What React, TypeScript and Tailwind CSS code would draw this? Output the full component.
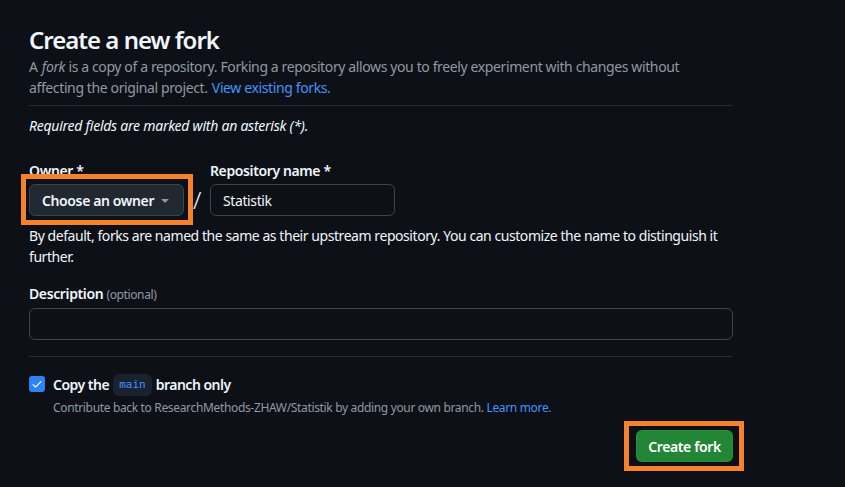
export default function App() {
  return (
    <main
      className="min-h-screen w-full bg-[#0d1117] text-[#f0f6fc] tracking-[-0.38px]"
      style={{ fontFamily: '"Noto Sans", "Liberation Sans", sans-serif' }}
    >
      <div className="w-[704px] ml-[29px] pt-[25px]">
        <h1 className="text-[24px] leading-[30px] font-semibold tracking-[-1px]">Create a new fork</h1>
        <p className="mt-[1px] text-[14px] leading-[21px] text-[#9198a1]">
          A <em className="pl-[1px]">fork</em> is a copy of a repository. Forking a repository allows you to freely experiment with
          changes without affecting the original project.{' '}
          <a className="text-[#4493f8] pl-[1px]">View existing forks.</a>
        </p>
        <div className="mt-[7px] border-t border-[#262c36]" />
        <p className="mt-[9px] text-[14px] leading-[21px] italic tracking-[-0.25px]">
          Required fields are marked with an asterisk (*).
        </p>

        <div className="mt-[24px] flex items-end gap-[9px]">
          <div className="flex flex-col">
            <label className="text-[14px] leading-[21px] font-semibold">Owner *</label>
            <div className="relative mt-[3px]">
              <button className="flex items-center h-[32px] w-[155px] pl-[12px] pr-[10px] rounded-[6px] border border-[#3d444d] bg-[#212830] text-[14px] font-semibold whitespace-nowrap">
                Choose an owner
                <svg width="16" height="16" viewBox="0 0 16 16" className="ml-auto" fill="#9198a1">
                  <path d="m4.427 7.427 3.396 3.396a.25.25 0 0 0 .354 0l3.396-3.396A.25.25 0 0 0 11.396 7H4.604a.25.25 0 0 0-.177.427Z" />
                </svg>
              </button>
              <div className="absolute -left-[8px] -right-[9px] -top-[10px] -bottom-[9px] border-[5px] border-[#f7822c]" />
            </div>
          </div>
          <span className="h-[32px] text-[24px] leading-[32px] text-[#f0f6fc] font-light">/</span>
          <div className="flex flex-col">
            <label className="text-[14px] leading-[21px] font-semibold">Repository name *</label>
            <input
              readOnly
              value="Statistik"
              className="mt-[3px] h-[32px] w-[185px] px-[12px] rounded-[6px] border border-[#3d444d] bg-[#0d1117] text-[14px] text-[#f0f6fc] outline-none"
            />
          </div>
        </div>
        <p className="mt-[9px] text-[14px] leading-[21px] tracking-[-0.44px]">
          By default, forks are named the same as their upstream repository. You can customize the name to distinguish it
          further.
        </p>

        <label className="mt-[16px] block text-[14px] leading-[21px] font-semibold">
          Description <span className="text-[12px] font-normal text-[#9198a1]">(optional)</span>
        </label>
        <input
          readOnly
          className="mt-[3px] block h-[32px] w-full px-[12px] rounded-[6px] border border-[#3d444d] bg-[#0d1117] outline-none"
        />
        <div className="mt-[16px] border-t border-[#262c36]" />

        <div className="mt-[17px] flex gap-[8px]">
          <div className="mt-[2px] flex h-[16px] w-[16px] shrink-0 items-center justify-center rounded-[3px] bg-[#2f81f7]">
            <svg width="12" height="12" viewBox="0 0 16 16" fill="white">
              <path d="M13.78 4.22a.75.75 0 0 1 0 1.06l-7.25 7.25a.75.75 0 0 1-1.06 0L2.22 9.28a.751.751 0 0 1 .018-1.042.751.751 0 0 1 1.042-.018L6 10.94l6.72-6.72a.75.75 0 0 1 1.06 0Z" />
            </svg>
          </div>
          <div className="flex flex-col">
            <div className="flex items-center text-[14px] leading-[20px] font-semibold tracking-[-0.5px]">
              Copy the
              <code
                className="mx-[4px] rounded-[6px] bg-[#1a2230] px-[6px] text-[11px] leading-[22px] font-normal text-[#4493f8] tracking-normal"
                style={{ fontFamily: '"DejaVu Sans Mono", "Liberation Mono", monospace' }}
              >
                main
              </code>
              branch only
            </div>
            <p className="mt-[3px] text-[12px] leading-[18px] text-[#9198a1] tracking-[-0.34px]">
              Contribute back to ResearchMethods-ZHAW/Statistik by adding your own branch.{' '}
              <a className="text-[#4493f8]">Learn more.</a>
            </p>
          </div>
        </div>

        <div className="mt-[13px] flex justify-end">
          <div className="relative">
            <button className="h-[32px] w-[97px] rounded-[6px] border border-[#2d9a44]/40 bg-[#238636] text-[14px] font-semibold text-white">
              Create fork
            </button>
            <div className="absolute -left-[12px] -right-[11px] -top-[9px] -bottom-[9px] border-[5px] border-[#f7822c]" />
          </div>
        </div>
      </div>
    </main>
  )
}
